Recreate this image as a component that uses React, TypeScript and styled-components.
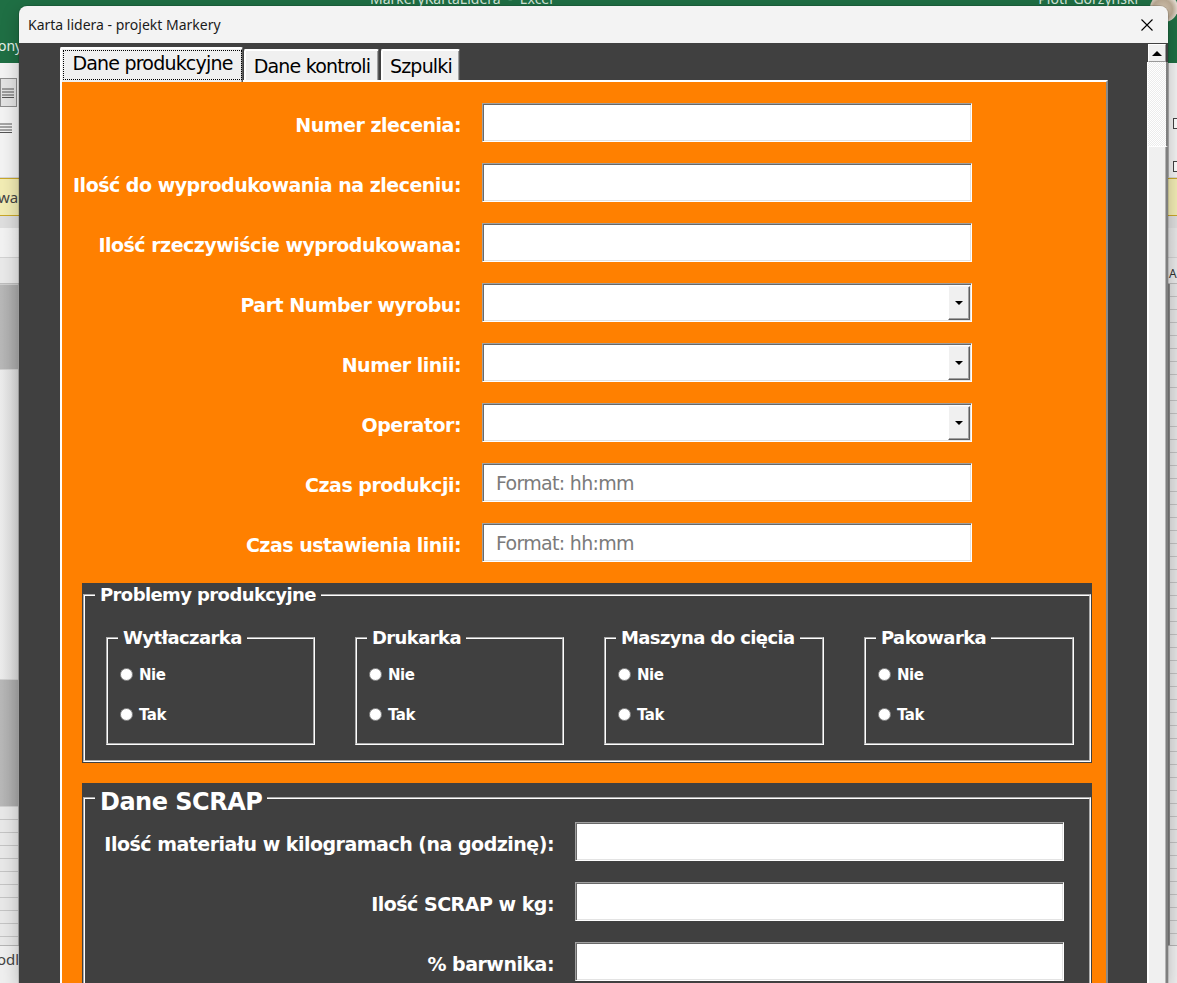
import React from 'react';
import styled, { createGlobalStyle } from 'styled-components';

const GlobalStyle = createGlobalStyle`
  html, body { margin: 0; padding: 0; width: 1177px; height: 983px; overflow: hidden; }
  body { font-family: "DejaVu Sans", sans-serif; background: #f3f3f3; }
  * { box-sizing: border-box; }
`;

/* ---------- Excel background ---------- */
const Desktop = styled.div`
  position: relative;
  width: 1177px;
  height: 983px;
  overflow: hidden;
  display: flex;
  flex-direction: column;
  background: #f3f3f3;
  font-family: "Noto Sans", "DejaVu Sans", sans-serif;
`;

const ExcelTitleBar = styled.div`
  height: 40px;
  flex: none;
  background: #1f6f44;
  display: flex;
  align-items: flex-start;
  padding-left: 370px;
  color: #d6e6dc;
  font-size: 14px;
  line-height: 18px;
`;

const AppTitle = styled.span`
  margin-top: -10px;
  flex: 1;
`;

const UserName = styled.span`
  margin-top: -10px;
  margin-right: 12px;
`;

const Avatar = styled.span`
  width: 28px;
  height: 28px;
  margin: -6px -1px 0 0;
  border-radius: 50%;
  background: radial-gradient(circle at 45% 55%, #d8c9b4 0, #b9a892 45%, #e9e4dc 75%);
`;

const RibbonTabs = styled.div`
  height: 23px;
  flex: none;
  background: #1f6f44;
  display: flex;
`;

const Sliver = styled.span<{ $indent: number }>`
  width: 19px;
  overflow: hidden;
  white-space: nowrap;
  text-indent: ${(p) => p.$indent}px;
`;

const RibbonTabText = styled(Sliver)`
  color: #e9f2ec;
  font-size: 14px;
  line-height: 12px;
`;

const Ribbon = styled.div`
  height: 115px;
  flex: none;
  background: #f3f3f3;
  border-bottom: 1px solid #d6d6d6;
  display: flex;
  justify-content: space-between;
`;

const RibbonColumn = styled.div`
  display: flex;
  flex-direction: column;
  gap: 16px;
  padding-top: 15px;
`;

const RibbonButton = styled.span`
  width: 17px;
  height: 29px;
  border: 1px solid #8d8d8d;
  background: #e3e3e3;
  display: flex;
  align-items: center;
  justify-content: flex-end;
  padding-right: 2px;
`;

const RibbonRightColumn = styled.div`
  width: 9px;
  display: flex;
  flex-direction: column;
  gap: 32px;
  padding-top: 55px;
  border-left: 1px solid #c8c8c8;
  padding-left: 4px;
`;

const RibbonCheck = styled.span`
  width: 10px;
  height: 11px;
  border: 1px solid #444;
  background: #fff;
`;

const MessageBar = styled.div`
  height: 38px;
  flex: none;
  background: #f2ecb4;
  border-top: 1px solid #c9a72a;
  border-bottom: 1px solid #c9a72a;
  display: flex;
`;

const MessageText = styled(Sliver)`
  color: #444;
  font-size: 15px;
  line-height: 36px;
`;

const GapStrip = styled.div`
  height: 12px;
  flex: none;
  background: #dedede;
`;

const FormulaStrip = styled.div`
  height: 30px;
  flex: none;
  background: linear-gradient(90deg, #f2f2f2, #e6e6e6);
  border-bottom: 1px solid #d2d2d2;
`;

const ColumnHeaders = styled.div`
  height: 26px;
  flex: none;
  background: #e9e9e9;
  border-bottom: 1px solid #bdbdbd;
  display: flex;
  justify-content: flex-end;
  align-items: flex-end;
  font-size: 12px;
  color: #333;
  padding-bottom: 2px;
`;

const ColumnLabel = styled.span`
  width: 9px;
  overflow: hidden;
  text-indent: 1px;
  white-space: nowrap;
  line-height: 14px;
`;

const SheetArea = styled.div`
  flex: 1;
  display: flex;
  justify-content: space-between;
  min-height: 0;
`;

const LeftPane = styled.div`
  width: 19px;
  display: flex;
  flex-direction: column;
  border-right: 1px solid #c6c6c6;
`;

const PaneBlock = styled.div<{ $h: number; $tone: 'dark' | 'light' | 'grid' }>`
  height: ${(p) => p.$h}px;
  flex: ${(p) => (p.$tone === 'grid' ? 1 : 'none')};
  background: ${(p) =>
    p.$tone === 'dark'
      ? 'linear-gradient(90deg, #b8b8b8, #a9a9a9)'
      : p.$tone === 'light'
      ? 'linear-gradient(90deg, #ececec, #dadada)'
      : 'repeating-linear-gradient(180deg, #e8e8e8 0, #e8e8e8 12px, #c4c4c4 12px, #c4c4c4 13px)'};
  border-top: 1px solid #cfcfcf;
`;

const RightPane = styled.div`
  width: 9px;
  border-left: 2px solid #8a8a8a;
  background: repeating-linear-gradient(180deg, #e4e4e4 0, #e4e4e4 12px, #c0c0c0 12px, #c0c0c0 13px);
`;

const SheetTabs = styled.div`
  height: 38px;
  flex: none;
  background: #efefef;
  border-top: 1px solid #b5b5b5;
  display: flex;
`;

const SheetTabText = styled(Sliver)`
  color: #444;
  font-size: 15px;
  line-height: 26px;
`;

/* ---------- Dialog window ---------- */
const Dialog = styled.section`
  position: absolute;
  left: 19px;
  top: 6px;
  width: 1149px;
  bottom: 0;
  display: flex;
  flex-direction: column;
  border-radius: 8px 8px 0 0;
  overflow: hidden;
  box-shadow: 0 0 0 1px rgba(0, 0, 0, 0.12), 0 6px 18px rgba(0, 0, 0, 0.25);
`;

const TitleBar = styled.header`
  height: 37px;
  flex: none;
  background: #f3f3f3;
  display: flex;
  align-items: center;
  justify-content: space-between;
  padding-left: 9px;
`;

const WindowTitle = styled.span`
  font-family: "Noto Sans", sans-serif;
  font-size: 14px;
  color: #1b1b1b;
`;

const CloseButton = styled.span`
  width: 42px;
  height: 37px;
  display: flex;
  align-items: center;
  justify-content: center;
`;

const WindowBody = styled.div`
  flex: 1;
  display: flex;
  min-height: 0;
`;

const ContentArea = styled.div`
  flex: 1;
  background: #404040;
  padding: 4px 0 0 41px;
  display: flex;
  flex-direction: column;
  overflow: hidden;
`;

const Scrollbar = styled.div`
  width: 21px;
  flex: none;
  background: #404040;
  display: flex;
  flex-direction: column;
`;

const ScrollArrow = styled.span`
  height: 18px;
  margin: 1px 2px 0 1px;
  background: #f0f0f0;
  border: 1px solid;
  border-color: #fff #9a9a9a #9a9a9a #fff;
  display: flex;
  align-items: center;
  justify-content: center;
`;

const ArrowUp = styled.span`
  width: 0;
  height: 0;
  border-left: 5px solid transparent;
  border-right: 5px solid transparent;
  border-bottom: 5px solid #000;
`;

const ScrollTrack = styled.span`
  height: 84px;
  flex: none;
  border-left: 1px solid #fff;
  border-right: 2px solid #7f7f7f;
  background-color: #ffffff;
  background-image: repeating-conic-gradient(#ececec 0 25%, #ffffff 0 50%);
  background-size: 2px 2px;
`;

const ScrollThumb = styled.span`
  flex: 1;
  background: #f0f0f0;
  border-top: 1px solid #fff;
  border-left: 2px solid #fff;
  border-right: 2px solid #7f7f7f;
  box-shadow: inset -1px 0 0 #b4b4b4;
`;

/* ---------- Tabs ---------- */
const TabStrip = styled.div`
  height: 33px;
  flex: none;
  display: flex;
  align-items: flex-end;
  padding-left: 2px;
  position: relative;
  z-index: 1;
`;

const Tab = styled.div<{ $active?: boolean; $width: number }>`
  width: ${(p) => p.$width}px;
  height: ${(p) => (p.$active ? 35 : 31)}px;
  margin: ${(p) => (p.$active ? '0 1px -2px -2px' : '0 2px 0 0')};
  padding: ${(p) => (p.$active ? '1px 0 2px 1px' : '0')};
  background: #f0f0f0;
  border-top: 2px solid #fff;
  border-left: 2px solid #fff;
  border-right: 1px solid #5a5a5a;
  box-shadow: inset -1px 0 0 #a0a0a0;
  border-radius: 2px 2px 0 0;
  display: flex;
  font-family: "DejaVu Sans", sans-serif;
  font-size: 19px;
  letter-spacing: -0.8px;
  color: #000;
`;

const TabLabel = styled.span<{ $focused?: boolean }>`
  flex: 1;
  display: flex;
  align-items: center;
  justify-content: center;
  border: 1px dotted ${(p) => (p.$focused ? '#000' : 'transparent')};
  padding-bottom: ${(p) => (p.$focused ? 4 : 0)}px;
  white-space: nowrap;
`;

const TabPage = styled.div`
  width: 1048px;
  flex: 1;
  min-height: 0;
  background: #ff8000;
  border-top: 2px solid #fff;
  border-left: 2px solid #fff;
  border-right: 2px solid #8a8a8a;
  padding-top: 21px;
  display: flex;
  flex-direction: column;
  overflow: hidden;
`;

/* ---------- Form ---------- */
const FieldGrid = styled.div<{ $labelWidth: number; $fieldWidth: number }>`
  display: grid;
  grid-template-columns: ${(p) => p.$labelWidth}px ${(p) => p.$fieldWidth}px;
  grid-auto-rows: 39px;
  column-gap: 21px;
  row-gap: 21px;
`;

const FieldLabel = styled.label`
  align-self: center;
  justify-self: end;
  padding-top: 5px;
  white-space: nowrap;
  color: #fff;
  font-family: "DejaVu Sans", sans-serif;
  font-weight: bold;
  font-size: 19px;
  letter-spacing: -0.5px;
`;

const TextBox = styled.div`
  background: #fff;
  border: 1px solid;
  border-color: #a0a0a0 #fff #fff #a0a0a0;
  box-shadow: inset 1px 1px 0 #696969, inset -1px -1px 0 #e3e3e3;
  display: flex;
  align-items: center;
  justify-content: space-between;
  padding-left: 13px;
  font-family: "DejaVu Sans", sans-serif;
  font-size: 19px;
  letter-spacing: -0.7px;
  color: #7b7b7b;
`;

const DropButton = styled.span`
  width: 22px;
  align-self: stretch;
  margin: 2px 1px 1px 0;
  background: #f0f0f0;
  border: 1px solid;
  border-color: #f4f4f4 #5e5e5e #5e5e5e #ffffff;
  box-shadow: inset -1px -1px 0 #a0a0a0;
  display: flex;
  align-items: center;
  justify-content: center;
`;

const ArrowDown = styled.span`
  width: 0;
  height: 0;
  border-left: 4px solid transparent;
  border-right: 4px solid transparent;
  border-top: 4px solid #000;
`;

/* ---------- Group boxes ---------- */
const GroupPanel = styled.div<{ $grow?: boolean }>`
  width: 1010px;
  margin: 21px 0 0 20px;
  background: #404040;
  padding: 0 1px 1px 1px;
  flex: ${(p) => (p.$grow ? 1 : 'none')};
  overflow: hidden;
  & + & {
    margin-top: 20px;
  }
`;

const Frame = styled.fieldset<{ $width?: number; $height: number }>`
  margin: 0;
  padding: 0;
  min-width: 0;
  width: ${(p) => (p.$width ? `${p.$width}px` : 'auto')};
  height: ${(p) => p.$height}px;
  flex: none;
  border: 2px groove #ffffff;
`;

const Legend = styled.legend<{ $size: number; $spacing: number; $padTop?: number; $lineHeight: number }>`
  margin-left: 10px;
  padding: ${(p) => p.$padTop ?? 0}px 5px 0 5px;
  line-height: ${(p) => p.$lineHeight}px;
  color: #fff;
  font-family: "DejaVu Sans", sans-serif;
  font-weight: bold;
  font-size: ${(p) => p.$size}px;
  letter-spacing: ${(p) => p.$spacing}px;
  white-space: nowrap;
`;

const SubGroupRow = styled.div`
  display: flex;
  gap: 40px;
  margin-top: 19px;
  padding-left: 21px;
`;

const RadioList = styled.div`
  display: flex;
  flex-direction: column;
  gap: 20px;
  padding: 14px 0 0 12px;
`;

const RadioOption = styled.label`
  height: 20px;
  display: flex;
  align-items: center;
  gap: 6px;
  padding-top: 1px;
  color: #fff;
  font-family: "DejaVu Sans", sans-serif;
  font-weight: bold;
  font-size: 15px;
  letter-spacing: -0.5px;
`;

const RadioDot = styled.span`
  width: 13px;
  height: 13px;
  border-radius: 50%;
  border: 1px solid #8e8e8e;
  background: radial-gradient(circle at 45% 45%, #ffffff 0, #ffffff 55%, #dcdcdc 100%);
`;

const ScrapGrid = styled(FieldGrid)`
  margin-top: 9px;
`;

type FieldDef = { label: string; combo?: boolean; placeholder?: string };

const productionFields: FieldDef[] = [
  { label: 'Numer zlecenia:' },
  { label: 'Ilość do wyprodukowania na zleceniu:' },
  { label: 'Ilość rzeczywiście wyprodukowana:' },
  { label: 'Part Number wyrobu:', combo: true },
  { label: 'Numer linii:', combo: true },
  { label: 'Operator:', combo: true },
  { label: 'Czas produkcji:', placeholder: 'Format: hh:mm' },
  { label: 'Czas ustawienia linii:', placeholder: 'Format: hh:mm' },
];

const scrapFields: FieldDef[] = [
  { label: 'Ilość materiału w kilogramach (na godzinę):' },
  { label: 'Ilość SCRAP w kg:' },
  { label: '% barwnika:' },
];

const machines = [
  { title: 'Wytłaczarka', width: 209 },
  { title: 'Drukarka', width: 209 },
  { title: 'Maszyna do cięcia', width: 220 },
  { title: 'Pakowarka', width: 210 },
];

const tabs = [
  { title: 'Dane produkcyjne', width: 183, active: true },
  { title: 'Dane kontroli', width: 135 },
  { title: 'Szpulki', width: 79 },
];

function Field({ def }: { def: FieldDef }) {
  return (
    <>
      <FieldLabel>{def.label}</FieldLabel>
      <TextBox>
        <span>{def.placeholder ?? ''}</span>
        {def.combo && (
          <DropButton>
            <ArrowDown />
          </DropButton>
        )}
      </TextBox>
    </>
  );
}

function LinesIcon() {
  return (
    <svg width="12" height="10" viewBox="0 0 12 10">
      {[1, 4, 7, 9.5].map((y) => (
        <line key={y} x1="0" y1={y} x2="12" y2={y} stroke="#555" strokeWidth="1" />
      ))}
    </svg>
  );
}

export default function App() {
  return (
    <>
      <GlobalStyle />
      <Desktop>
        <ExcelTitleBar>
          <AppTitle>MarkeryKartaLidera&nbsp;&nbsp;-&nbsp;&nbsp;Excel</AppTitle>
          <UserName>Piotr Górzyński</UserName>
          <Avatar />
        </ExcelTitleBar>
        <RibbonTabs>
          <RibbonTabText $indent={-2}>ony</RibbonTabText>
        </RibbonTabs>
        <Ribbon>
          <RibbonColumn>
            <RibbonButton>
              <LinesIcon />
            </RibbonButton>
            <LinesIcon />
          </RibbonColumn>
          <RibbonRightColumn>
            <RibbonCheck />
            <RibbonCheck />
          </RibbonRightColumn>
        </Ribbon>
        <MessageBar>
          <MessageText $indent={-2}>war</MessageText>
        </MessageBar>
        <GapStrip />
        <FormulaStrip />
        <ColumnHeaders>
          <ColumnLabel>AL</ColumnLabel>
        </ColumnHeaders>
        <SheetArea>
          <LeftPane>
            <PaneBlock $h={85} $tone="dark" />
            <PaneBlock $h={310} $tone="light" />
            <PaneBlock $h={127} $tone="dark" />
            <PaneBlock $h={140} $tone="grid" />
          </LeftPane>
          <RightPane />
        </SheetArea>
        <SheetTabs>
          <SheetTabText $indent={-3}>odl</SheetTabText>
        </SheetTabs>

        <Dialog>
          <TitleBar>
            <WindowTitle>Karta lidera - projekt Markery</WindowTitle>
            <CloseButton>
              <svg width="12" height="12" viewBox="0 0 12 12">
                <path d="M0.5 0.5 L11.5 11.5 M11.5 0.5 L0.5 11.5" stroke="#000" strokeWidth="1.1" fill="none" />
              </svg>
            </CloseButton>
          </TitleBar>
          <WindowBody>
            <ContentArea>
              <TabStrip>
                {tabs.map((t) => (
                  <Tab key={t.title} $active={t.active} $width={t.width}>
                    <TabLabel $focused={t.active}>{t.title}</TabLabel>
                  </Tab>
                ))}
              </TabStrip>
              <TabPage>
                <FieldGrid $labelWidth={399} $fieldWidth={490}>
                  {productionFields.map((f) => (
                    <Field key={f.label} def={f} />
                  ))}
                </FieldGrid>

                <GroupPanel>
                  <Frame $height={179}>
                    <Legend $size={18} $spacing={-0.6} $lineHeight={24}>
                      Problemy produkcyjne
                    </Legend>
                    <SubGroupRow>
                      {machines.map((m) => (
                        <Frame key={m.title} $width={m.width} $height={119}>
                          <Legend $size={18} $spacing={-0.6} $lineHeight={24}>
                            {m.title}
                          </Legend>
                          <RadioList>
                            <RadioOption>
                              <RadioDot />
                              Nie
                            </RadioOption>
                            <RadioOption>
                              <RadioDot />
                              Tak
                            </RadioOption>
                          </RadioList>
                        </Frame>
                      ))}
                    </SubGroupRow>
                  </Frame>
                </GroupPanel>

                <GroupPanel $grow>
                  <Frame $height={260}>
                    <Legend $size={24} $spacing={-0.5} $padTop={8} $lineHeight={22}>
                      Dane SCRAP
                    </Legend>
                    <ScrapGrid $labelWidth={469} $fieldWidth={489}>
                      {scrapFields.map((f) => (
                        <Field key={f.label} def={f} />
                      ))}
                    </ScrapGrid>
                  </Frame>
                </GroupPanel>
              </TabPage>
            </ContentArea>
            <Scrollbar>
              <ScrollArrow>
                <ArrowUp />
              </ScrollArrow>
              <ScrollTrack />
              <ScrollThumb />
            </Scrollbar>
          </WindowBody>
        </Dialog>
      </Desktop>
    </>
  );
}
